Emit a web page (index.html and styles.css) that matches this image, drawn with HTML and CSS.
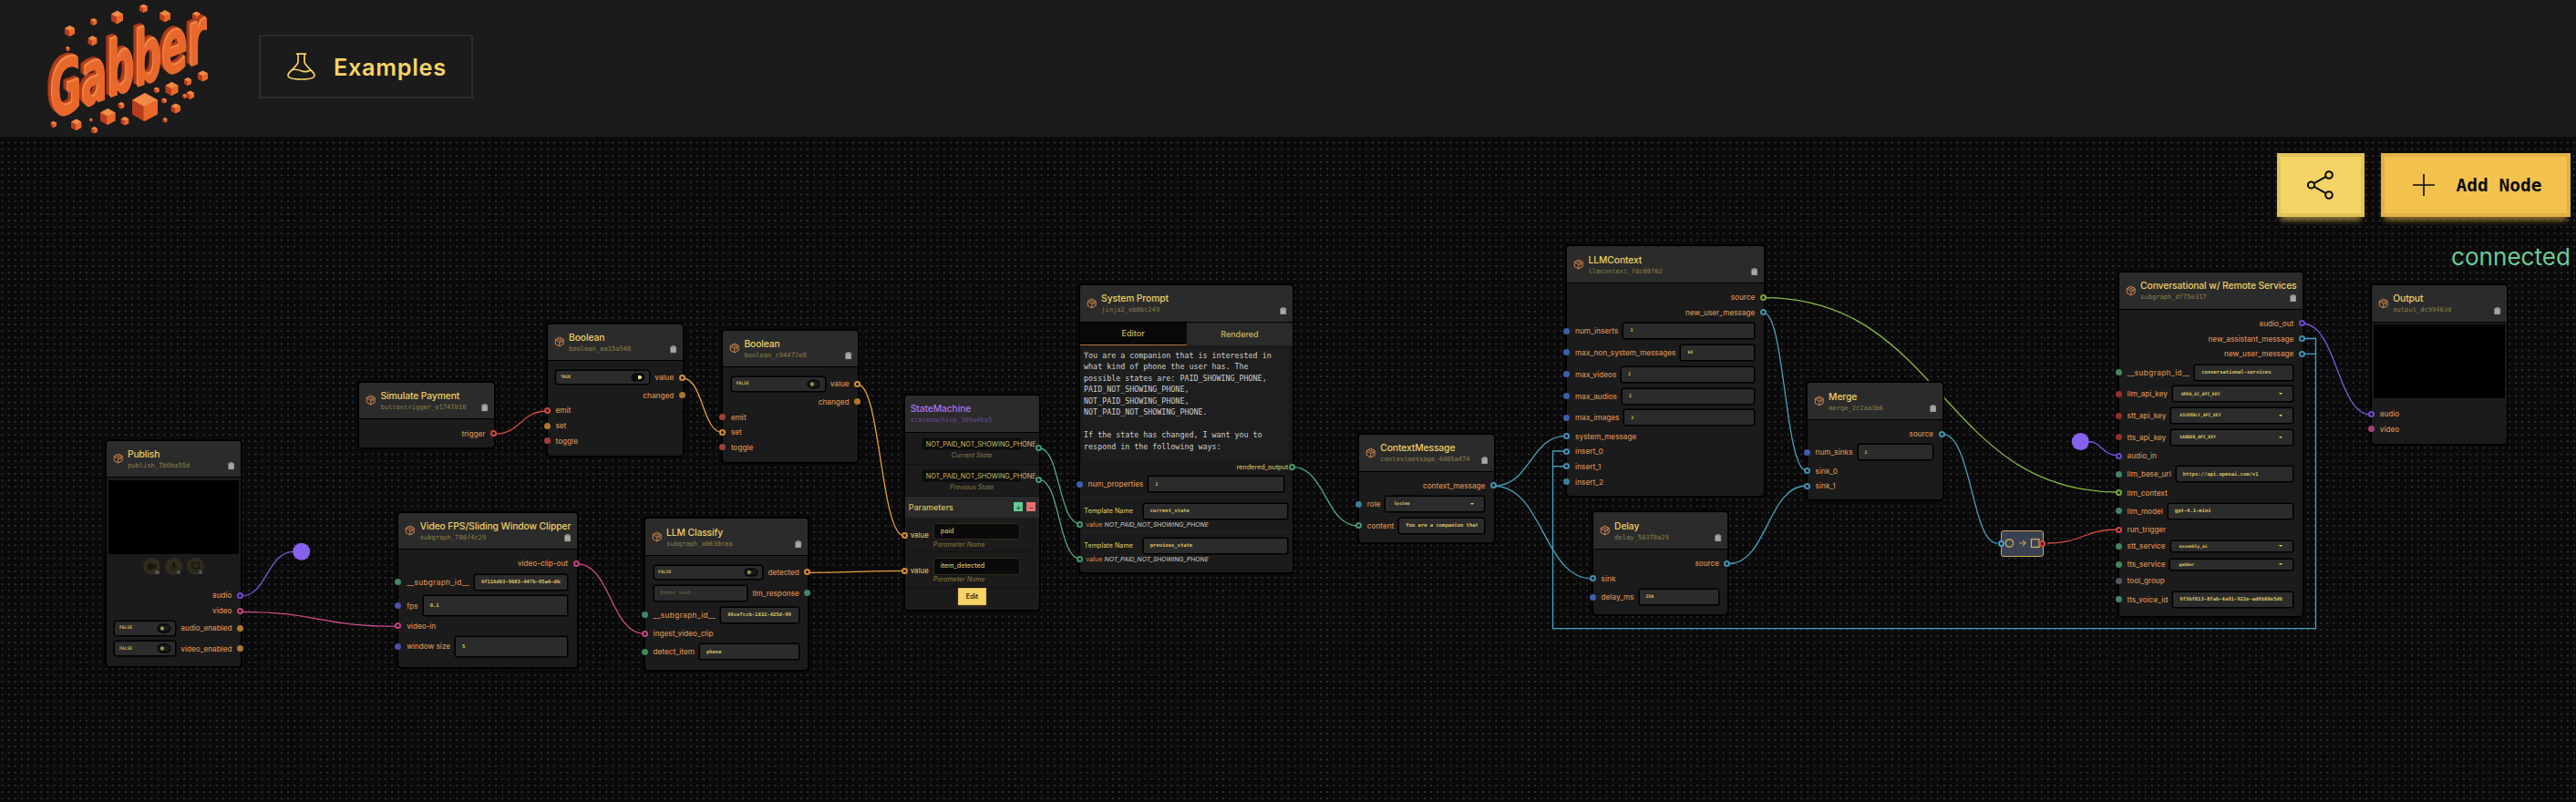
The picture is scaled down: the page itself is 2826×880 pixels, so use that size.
FILE: index.html
```html
<!DOCTYPE html>
<html lang="en">
<head>
<meta charset="utf-8">
<title>Gabber</title>
<link rel="stylesheet" href="styles.css">
</head>
<body>
<svg class="defs" width="0" height="0" aria-hidden="true">
  <symbol id="cube" viewBox="0 0 24 24"><path d="M12 1.800l9.300 5v10.400l-9.300 5-9.300-5V6.800z M2.700 6.800L7.500 9.400 M12 22v-9.500 M12 12.500l9.300-5.500 M12 12.500L7 9.700 M7 4.600l5 2.900 5-2.900 M17 10v5" fill="none" stroke="currentColor" stroke-width="2"/></symbol>
  <symbol id="clip" viewBox="0 0 14 16"><path d="M0 2h14v14H0z" fill="#6f6656"/><path d="M1.500 3h11v11.500h-11z" fill="#a9a7a4"/><path d="M4 0h6v4H4z" fill="#8d8d8d"/></symbol>
  <symbol id="box" viewBox="0 0 20 22"><path d="M0 5.500L10 0l10 5.500v11L10 22 0 16.500z" fill="#d9521f"/><path d="M0 5.500L10 0l10 5.500L10 11z" fill="#f08a45"/><path d="M0 5.500L9 10.500V22L0 16.500z" fill="#b93c1c"/><path d="M9 10.500l11-5v11L9 22z" fill="#e8692b"/></symbol>
</svg>

<header class="topbar">
  <div class="logo">
    <svg class="cubes" width="210" height="150" viewBox="0 0 210 150">
      <use href="#box" x="31" y="28" width="11" height="12"/><use href="#box" x="59" y="20" width="7.500" height="8"/>
      <use href="#box" x="82" y="11" width="13" height="16"/><use href="#box" x="113" y="4.500" width="9" height="9.500"/>
      <use href="#box" x="135" y="10.500" width="12" height="14.500"/><use href="#box" x="171" y="12.500" width="9" height="10"/>
      <use href="#box" x="56.500" y="39" width="10" height="11.500"/><use href="#box" x="32" y="51" width="4.500" height="5"/>
      <use href="#box" x="105" y="102" width="28" height="31"/><use href="#box" x="69.500" y="119" width="17.500" height="18"/>
      <use href="#box" x="38" y="130.500" width="11.500" height="12.500"/><use href="#box" x="15.500" y="133" width="6.500" height="7"/>
      <use href="#box" x="58" y="129.500" width="3.500" height="4"/><use href="#box" x="60" y="139" width="7" height="7.500"/>
      <use href="#box" x="92.500" y="128" width="9" height="9.500"/><use href="#box" x="89.500" y="112" width="7" height="7.500"/>
      <use href="#box" x="141" y="90" width="15" height="15"/><use href="#box" x="128.500" y="95.500" width="6.500" height="6.500"/>
      <use href="#box" x="162" y="85" width="8" height="9"/><use href="#box" x="176.500" y="77.500" width="12" height="12"/>
      <use href="#box" x="160" y="103" width="5" height="5"/><use href="#box" x="164.500" y="99.500" width="8.500" height="9.500"/>
      <use href="#box" x="137" y="107.500" width="6" height="6"/><use href="#box" x="147.500" y="113.500" width="10.500" height="11"/>
      <use href="#box" x="138.500" y="129" width="5" height="5.500"/>
    </svg>
    <span class="wordmark">Gabber</span>
  </div>
  <a class="examples">
    <svg width="31" height="30" viewBox="0 0 31 30" fill="none" stroke="currentColor" stroke-width="1.700" stroke-linecap="round" stroke-linejoin="round"><path d="M10.500 1.200h10M12 1.500v8.500c0 2-3 5-6.500 8.500C2 21.500.8 23.500 1 25c.3 2.800 6 4 14.500 4s14.200-1.200 14.500-4c.2-1.500-1-3.500-4.500-6.500C22 15 19 12 19 10V1.500M6 18.500c4-.8 7 .3 9.500 1.300 3 1.200 6.500 1 9.500-.6"/></svg>
    <span>Examples</span>
  </a>
</header>

<main class="canvas">
  <svg class="edges" width="2826" height="730" viewBox="0 150 2826 730" fill="none">
    <g class="e-purple"><path d="M264 654.300C293 654.300 293 605.300 322 605.300"/><path d="M2526 355C2564 355 2564 455 2601 455"/><path d="M2290 484.500C2307 484.500 2305 499.700 2324 499.700"/></g>
    <g class="e-pink"><path d="M264 671.300C350 671.300 350 687.300 436 687.300"/><path d="M633 618.700C670 618.700 670 695.300 707 695.300"/></g>
    <g class="e-red"><path d="M542 476.300C571 476.300 571 451 600 451"/><path d="M2246 596C2285 596 2285 581 2324 581"/></g>
    <g class="e-orange"><path d="M749 415C771 415 771 474.300 792 474.300"/><path d="M941 422C966 422 966 588 992 588"/><path d="M887 628.300C939 628.300 939 626.300 992 626.300"/></g>
    <g class="e-green"><path d="M1141 492C1162 492 1162 574.300 1184 574.300"/><path d="M1141 526.700C1162 526.700 1162 612.700 1184 612.700"/><path d="M1418 512.300C1454 512.300 1454 577 1490 577"/></g>
    <g class="e-lime"><path d="M1935 326.700C2130 326.700 2130 540 2324 540"/></g>
    <g class="e-blue"><path d="M1639 533.300C1679 533.300 1679 478.300 1718 478.300"/><path d="M1639 533.300C1693 533.300 1693 635 1747 635"/><path d="M1935 343.300C1958 343.300 1958 516.500 1982 516.500"/><path d="M1896 618.700C1939 618.700 1939 533 1982 533"/><path d="M2131 476.300C2163 476.300 2163 596 2191 596"/><path d="M2526 371.500H2540.500V689.700H1703.500V495H1718"/><path d="M2526 388.300H2540.500M1703.500 511.700H1718"/></g>
    <circle cx="330.700" cy="605.300" r="9.500" fill="#8760ee"/><circle cx="2282.300" cy="484.500" r="9.500" fill="#8760ee"/>
  </svg>

  <section class="node publish">
    <header class="head"><svg class="cube"><use href="#cube"/></svg><div class="names"><b>Publish</b><code>publish_7b0ba55d</code></div><svg class="clip"><use href="#clip"/></svg></header>
    <div class="video"></div>
    <div class="devices">
      <span><svg viewBox="0 0 20 20"><path d="M5.500 6.500h6v7h-6zM12 9l3-2.500v7L12 11z" fill="#15140e"/></svg></span>
      <span><svg viewBox="0 0 20 20"><path d="M8.500 5h3v6h-3zM9.500 13h1v2h-1z" fill="#15140e"/><path d="M7 9.500c0 5 6 5 6 0" fill="none" stroke="#15140e"/></svg></span>
      <span><svg viewBox="0 0 20 20"><path d="M6 6h8v6H6zM8 14.500h4" fill="none" stroke="#15140e" stroke-width="1.300"/></svg></span>
    </div>
    <div class="ports">
      <div class="row out"><label>audio</label><i class="pin r purple on"></i></div>
      <div class="row out"><label>video</label><i class="pin r pink on"></i></div>
      <div class="row bool"><span class="toggle">FALSE<i></i></span><label>audio_enabled</label><i class="pin r orange"></i></div>
      <div class="row bool"><span class="toggle">FALSE<i></i></span><label>video_enabled</label><i class="pin r orange"></i></div>
    </div>
  </section>

  <section class="node simulate">
    <header class="head"><svg class="cube"><use href="#cube"/></svg><div class="names"><b>Simulate Payment</b><code>buttontrigger_e1747b10</code></div><svg class="clip"><use href="#clip"/></svg></header>
    <div class="ports"><div class="row out"><label>trigger</label><i class="pin r red on"></i></div></div>
  </section>

  <section class="node clipper">
    <header class="head"><svg class="cube"><use href="#cube"/></svg><div class="names"><b>Video FPS/Sliding Window Clipper</b><code>subgraph_786f4c29</code></div><svg class="clip"><use href="#clip"/></svg></header>
    <div class="ports">
      <div class="row out"><label>video-clip-out</label><i class="pin r pink on"></i></div>
      <div class="row input"><i class="pin l green"></i><label class="dunder">__subgraph_id__</label><span class="field"><span>6f116d63-9083-447b-95a4-db5</span></span></div>
      <div class="row tall"><i class="pin l indigo"></i><label>fps</label><span class="field">0.1</span></div>
      <div class="row"><i class="pin l pink on"></i><label>video-in</label></div>
      <div class="row tall"><i class="pin l indigo"></i><label>window size</label><span class="field">5</span></div>
    </div>
  </section>

  <section class="node bool1">
    <header class="head"><svg class="cube"><use href="#cube"/></svg><div class="names"><b>Boolean</b><code>boolean_ea15a548</code></div><svg class="clip"><use href="#clip"/></svg></header>
    <div class="ports">
      <div class="row bool"><span class="toggle yes">TRUE<i></i></span><label>value</label><i class="pin r orange on"></i></div>
      <div class="row out"><label>changed</label><i class="pin r orange"></i></div>
      <div class="row"><i class="pin l red on"></i><label>emit</label></div>
      <div class="row"><i class="pin l orange"></i><label>set</label></div>
      <div class="row"><i class="pin l red"></i><label>toggle</label></div>
    </div>
  </section>

  <section class="node bool2">
    <header class="head"><svg class="cube"><use href="#cube"/></svg><div class="names"><b>Boolean</b><code>boolean_c94472e8</code></div><svg class="clip"><use href="#clip"/></svg></header>
    <div class="ports">
      <div class="row bool"><span class="toggle">FALSE<i></i></span><label>value</label><i class="pin r orange on"></i></div>
      <div class="row out"><label>changed</label><i class="pin r orange"></i></div>
      <div class="row"><i class="pin l red"></i><label>emit</label></div>
      <div class="row"><i class="pin l orange on"></i><label>set</label></div>
      <div class="row"><i class="pin l red"></i><label>toggle</label></div>
    </div>
  </section>

  <section class="node classify">
    <header class="head"><svg class="cube"><use href="#cube"/></svg><div class="names"><b>LLM Classify</b><code>subgraph_a0630cea</code></div><svg class="clip"><use href="#clip"/></svg></header>
    <div class="ports">
      <div class="row bool"><span class="toggle">FALSE<i></i></span><label>detected</label><i class="pin r orange on"></i></div>
      <div class="row input"><span class="field hint">Enter text...</span><label>llm_response</label><i class="pin r green"></i></div>
      <div class="row input"><i class="pin l green"></i><label class="dunder">__subgraph_id__</label><span class="field"><span>66ce7ccb-1832-425d-99</span></span></div>
      <div class="row"><i class="pin l pink on"></i><label>ingest_video_clip</label></div>
      <div class="row input"><i class="pin l green"></i><label>detect_item</label><span class="field">phone</span></div>
    </div>
  </section>

  <section class="node machine">
    <header class="head"><div class="names"><b>StateMachine</b><code>statemachine_309a4ba5</code></div></header>
    <div class="state"><span class="statebox">NOT_PAID_NOT_SHOWING_PHONE</span><em>Current State</em><i class="pin r green on"></i></div>
    <div class="state"><span class="statebox">NOT_PAID_NOT_SHOWING_PHONE</span><em>Previous State</em><i class="pin r green on"></i></div>
    <div class="params"><span>Parameters</span><button class="plus">+</button><button class="minus">−</button></div>
    <div class="param"><i class="pin l orange on"></i><label>value</label><div><span class="parambox">paid</span><em>Parameter Name</em></div></div>
    <div class="param"><i class="pin l orange on"></i><label>value</label><div><span class="parambox">item_detected</span><em>Parameter Name</em></div></div>
    <button class="edit">Edit</button>
  </section>

  <section class="node prompt">
    <header class="head"><svg class="cube"><use href="#cube"/></svg><div class="names"><b>System Prompt</b><code>jinja2_eb0bc249</code></div><svg class="clip"><use href="#clip"/></svg></header>
    <nav class="tabs"><span class="active">Editor</span><span>Rendered</span></nav>
    <pre class="editor">You are a companion that is interested in
what kind of phone the user has. The
possible states are: PAID_SHOWING_PHONE,
PAID_NOT_SHOWING_PHONE,
NOT_PAID_SHOWING_PHONE,
NOT_PAID_NOT_SHOWING_PHONE.

If the state has changed, I want you to
respond in the following ways:</pre>
    <div class="rendered"><label>rendered_output</label><i class="pin r green on"></i></div>
    <div class="row input"><i class="pin l blue"></i><label>num_properties</label><span class="field num">2</span></div>
    <div class="template"><div class="tname"><label>Template Name</label><span class="field">current_state</span></div><div class="tvalue"><i class="pin l green on"></i><label>value</label><em>NOT_PAID_NOT_SHOWING_PHONE</em></div></div>
    <div class="template"><div class="tname"><label>Template Name</label><span class="field">previous_state</span></div><div class="tvalue"><i class="pin l green on"></i><label>value</label><em>NOT_PAID_NOT_SHOWING_PHONE</em></div></div>
  </section>

  <section class="node context">
    <header class="head"><svg class="cube"><use href="#cube"/></svg><div class="names"><b>ContextMessage</b><code>contextmessage_4005a474</code></div><svg class="clip"><use href="#clip"/></svg></header>
    <div class="ports">
      <div class="row out"><label>context_message</label><i class="pin r teal on"></i></div>
      <div class="row input"><i class="pin l teal"></i><label>role</label><span class="field select wide">System</span></div>
      <div class="row input"><i class="pin l green on"></i><label>content</label><span class="field"><span>You are a companion that</span></span></div>
    </div>
  </section>

  <section class="node llm">
    <header class="head"><svg class="cube"><use href="#cube"/></svg><div class="names"><b>LLMContext</b><code>llmcontext_fdc08f62</code></div><svg class="clip"><use href="#clip"/></svg></header>
    <div class="ports">
      <div class="row out"><label>source</label><i class="pin r lime on"></i></div>
      <div class="row out"><label>new_user_message</label><i class="pin r teal on"></i></div>
      <div class="row input"><i class="pin l blue"></i><label>num_inserts</label><span class="field num">3</span></div>
      <div class="row input"><i class="pin l blue"></i><label>max_non_system_messages</label><span class="field num">64</span></div>
      <div class="row input"><i class="pin l blue"></i><label>max_videos</label><span class="field num">2</span></div>
      <div class="row input"><i class="pin l blue"></i><label>max_audios</label><span class="field num">2</span></div>
      <div class="row input"><i class="pin l blue"></i><label>max_images</label><span class="field num">2</span></div>
      <div class="row"><i class="pin l teal on"></i><label>system_message</label></div>
      <div class="row"><i class="pin l teal on"></i><label>insert_0</label></div>
      <div class="row"><i class="pin l teal on"></i><label>insert_1</label></div>
      <div class="row"><i class="pin l teal"></i><label>insert_2</label></div>
    </div>
  </section>

  <section class="node delay">
    <header class="head"><svg class="cube"><use href="#cube"/></svg><div class="names"><b>Delay</b><code>delay_50378a29</code></div><svg class="clip"><use href="#clip"/></svg></header>
    <div class="ports">
      <div class="row out"><label>source</label><i class="pin r teal on"></i></div>
      <div class="row"><i class="pin l teal on"></i><label>sink</label></div>
      <div class="row input"><i class="pin l blue"></i><label>delay_ms</label><span class="field num">250</span></div>
    </div>
  </section>

  <section class="node merge">
    <header class="head"><svg class="cube"><use href="#cube"/></svg><div class="names"><b>Merge</b><code>merge_2c2aa3b6</code></div><svg class="clip"><use href="#clip"/></svg></header>
    <div class="ports">
      <div class="row out"><label>source</label><i class="pin r teal on"></i></div>
      <div class="row input"><i class="pin l blue"></i><label>num_sinks</label><span class="field num">2</span></div>
      <div class="row"><i class="pin l teal on"></i><label>sink_0</label></div>
      <div class="row"><i class="pin l teal on"></i><label>sink_1</label></div>
    </div>
  </section>

  <div class="convert">
    <i class="pin l sky on"></i>
    <svg width="45" height="26" viewBox="0 0 45 26" fill="none" stroke="#dcb04b" stroke-width="1.200"><circle cx="8.500" cy="13" r="4.200"/><path d="M19 13h6.500M23 10l3 3-3 3" stroke="#b59a55"/><path d="M32.500 8.700h8.500v8.600h-8.500z"/></svg>
    <i class="pin r coral on"></i>
  </div>

  <section class="node remote">
    <header class="head"><svg class="cube"><use href="#cube"/></svg><div class="names"><b>Conversational w/ Remote Services</b><code>subgraph_df75e317</code></div><svg class="clip"><use href="#clip"/></svg></header>
    <div class="ports">
      <div class="row out"><label>audio_out</label><i class="pin r purple on"></i></div>
      <div class="row out"><label>new_assistant_message</label><i class="pin r teal on"></i></div>
      <div class="row out"><label>new_user_message</label><i class="pin r teal on"></i></div>
      <div class="row input"><i class="pin l green"></i><label class="dunder">__subgraph_id__</label><span class="field">conversational-services</span></div>
      <div class="row input"><i class="pin l crimson"></i><label>llm_api_key</label><span class="field select">OPEN_AI_API_KEY</span></div>
      <div class="row input"><i class="pin l crimson"></i><label>stt_api_key</label><span class="field select">ASSEMBLY_API_KEY</span></div>
      <div class="row input"><i class="pin l crimson"></i><label>tts_api_key</label><span class="field select">GABBER_API_KEY</span></div>
      <div class="row"><i class="pin l purple on"></i><label>audio_in</label></div>
      <div class="row input"><i class="pin l green"></i><label>llm_base_url</label><span class="field">https://api.openai.com/v1</span></div>
      <div class="row"><i class="pin l lime on"></i><label>llm_context</label></div>
      <div class="row input"><i class="pin l green"></i><label>llm_model</label><span class="field">gpt-4.1-mini</span></div>
      <div class="row"><i class="pin l red on"></i><label>run_trigger</label></div>
      <div class="row small"><i class="pin l green"></i><label>stt_service</label><span class="field select">assembly_ai</span></div>
      <div class="row small"><i class="pin l green"></i><label>tts_service</label><span class="field select">gabber</span></div>
      <div class="row"><i class="pin l gray"></i><label>tool_group</label></div>
      <div class="row input"><i class="pin l green"></i><label>tts_voice_id</label><span class="field"><span>9f3bf013-8fab-4a91-922e-ad6b80e5d6</span></span></div>
    </div>
  </section>

  <section class="node output">
    <header class="head"><svg class="cube"><use href="#cube"/></svg><div class="names"><b>Output</b><code>output_dc99463d</code></div><svg class="clip"><use href="#clip"/></svg></header>
    <div class="video"></div>
    <div class="ports">
      <div class="row"><i class="pin l purple on"></i><label>audio</label></div>
      <div class="row"><i class="pin l pink"></i><label>video</label></div>
    </div>
  </section>

  <aside class="panel">
    <div class="actions">
      <button class="share"><svg width="32" height="34" viewBox="0 0 32 34" fill="none" stroke="#0a0a0a" stroke-width="2"><circle cx="5.500" cy="17" r="3.600"/><circle cx="25" cy="6" r="3.800"/><circle cx="25" cy="28" r="3.800"/><path d="M8.500 15.300L21.700 7.900M8.500 18.700l13.200 7.400"/></svg></button>
      <button class="add"><svg width="24" height="24" viewBox="0 0 24 24" fill="none" stroke="#0a0a0a" stroke-width="1.600"><path d="M12 0v24M0 12h24"/></svg><span>Add Node</span></button>
    </div>
    <div class="status">connected</div>
  </aside>
</main>
</body>
</html>
```
FILE: styles.css
```css
* { box-sizing: border-box; }
body { margin: 0; background: #0a0a0a; font-family: Inter, "Liberation Sans", sans-serif; width: 2826px; height: 880px; overflow: hidden; }
button { font: inherit; border: 0; padding: 0; }
.defs { position: absolute; }

.topbar { height: 150px; background: #1b1b1b; display: flex; align-items: flex-start; padding-left: 40px; gap: 34px; }
.logo { position: relative; width: 210px; height: 150px; }
.cubes { display: block; }
.wordmark {
  position: absolute; left: 15px; top: 76px; font: 700 70px/70px "DejaVu Sans", sans-serif; color: #e8682c; letter-spacing: -1px;
  transform-origin: 0 100%; transform: matrix(0.61, -0.235, 0, 1.2, 0, 0);
  text-shadow: -1px -1px #f08a45, -2px -2px #f08a45, -3px -2.500px #c04520, -4px -3px #b9401e, -5px -3.500px #b23b1c, -6px -4px #b5401f, -7px -4.500px #a93519, -8px -5px #a93519;
}
.examples { margin-top: 38px; width: 235px; height: 70px; border: 2px solid #2d2d2d; display: flex; align-items: center; gap: 20px; padding-left: 29px; color: #f6d365; font-size: 25.300px; font-weight: 600; letter-spacing: 0.700px; }

.canvas { position: relative; height: 730px; background: radial-gradient(circle, #424242 0.550px, transparent 0.850px) -1px 3px / 7.125px 7.125px #0a0a0a; }
.edges { position: absolute; left: 0; top: 0; }
.edges g { stroke-width: 1.300; }
.e-purple { stroke: #7b57dd; } .e-pink { stroke: #d34d8b; } .e-red { stroke: #d64c46; } .e-orange { stroke: #e79d37; }
.e-green { stroke: #4ead7e; } .e-lime { stroke: #88bb3a; } .e-blue { stroke: #48a2c3; }

.node { position: absolute; background: #1b1b1b; border: 1px solid #000; border-radius: 4px; box-shadow: 0 0 1px 1px #000; }
.publish { left: 115.700px; top: 332.500px; width: 149.300px; height: 249.500px; }
.simulate { left: 393.200px; top: 268.700px; width: 149.700px; height: 73.500px; }
.clipper { left: 436.400px; top: 411.500px; width: 197.200px; height: 171px; }
.bool1 { left: 599.700px; top: 204.500px; width: 150px; height: 146.300px; }
.bool2 { left: 792.100px; top: 211.700px; width: 150px; height: 146.300px; }
.classify { left: 706.800px; top: 418.300px; width: 180.500px; height: 167.300px; }
.machine { left: 991.700px; top: 283px; width: 149.500px; height: 237.300px; }
.prompt { left: 1183.800px; top: 162px; width: 235.500px; height: 316.500px; }
.context { left: 1490px; top: 326px; width: 149.800px; height: 120.300px; }
.llm { left: 1718.300px; top: 119.300px; width: 217.500px; height: 275.300px; }
.delay { left: 1746.800px; top: 411.300px; width: 149.700px; height: 113.700px; }
.merge { left: 1981.800px; top: 269.300px; width: 149.800px; height: 130px; }
.remote { left: 2323.800px; top: 148px; width: 203px; height: 378.700px; }
.output { left: 2601px; top: 162px; width: 150px; height: 176.300px; }

.head { height: 40.500px; background: #2b2b2b; border-bottom: 1px solid #000; border-radius: 3px 3px 0 0; display: flex; padding: 0 6.500px 0 7px; }
.cube { width: 11.500px; height: 12px; margin-top: 13.500px; color: #d98a4e; flex: none; }
.names { width: 0; flex: 1; display: flex; flex-direction: column; padding: 7.300px 0 0 4.800px; white-space: nowrap; }
.names b { font-size: 10.300px; line-height: 14px; font-weight: 500; letter-spacing: -0.100px; color: #ecd065; }
.names code { font: 7.100px/11px "DejaVu Sans Mono", monospace; color: #8f8147; }
.clip { width: 7.500px; height: 8.500px; margin: 23.500px 0 0 -8px; flex: none; }

.ports { padding-top: 7.100px; }
.row { position: relative; height: 16.700px; display: flex; align-items: center; gap: 5px; padding: 0 9.500px 0 8.800px; }
.row.out { justify-content: flex-end; }
.row.input { height: 23.800px; }
.row.small { height: 19.800px; }
.row.tall { height: 28px; }
.row.bool { height: 22.200px; }
label { font-size: 8.120px; font-weight: 500; color: #d58d53; white-space: nowrap; }
.dunder { letter-spacing: 0.380px; }

.field { flex: 1; width: 0; height: 18px; background: #2b2b2b; border: 1px solid #000; border-radius: 2.500px; box-shadow: 0 0 0 0.500px #000; padding: 0 7px; overflow: hidden; white-space: nowrap; color: #dcc468; font: 700 5.500px/15.500px "DejaVu Sans Mono", monospace; display: flex; align-items: center; }
.field > span { min-width: 0; overflow: hidden; }
.small .field { height: 13px; line-height: 11px; }
.tall .field { height: 23px; }
.field.num { font-size: 4.700px; }
.field.select { font-size: 4.700px; padding-left: 9px; padding-right: 11px; }
.field.select::after { content: ""; margin-left: auto; border: 2px solid transparent; border-top: 2.500px solid #f0d060; border-bottom: 0; }
.field.hint { color: #77704c; font-weight: 400; }
.toggle { flex: 1; height: 16.500px; background: #2b2b2b; border: 1px solid #000; border-radius: 3px; box-shadow: 0 0 0 0.500px #000; padding: 0 5.500px 0 4.500px; display: flex; align-items: center; justify-content: space-between; color: #cdb864; font: 700 4.700px/14px "DejaVu Sans Mono", monospace; }
.toggle i { width: 13.500px; height: 8.500px; border: 1px solid #000; border-radius: 5px; background: radial-gradient(circle at 3.800px 50%, #9a8c55 1.900px, #1b1b1b 2.300px); box-shadow: 0 0 0 0.500px #000; }
.toggle.yes i { background: radial-gradient(circle at 7.800px 50%, #fbe36c 1.900px, #0a0a0a 2.300px); }

.pin { position: absolute; top: 50%; width: 7px; height: 7px; margin-top: -3.500px; border-radius: 50%; background: var(--c); }
.pin.l { left: -4px; }
.pin.r { right: -3px; }
.pin.on { background: radial-gradient(circle, #0a0a0a 1.100px, var(--r) 1.700px); }
.orange { --c: #ad782c; --r: #d98e2e; } .red { --c: #a03f3b; --r: #d4453f; } .green { --c: #428763; --r: #43996d; }
.teal { --c: #3c8096; --r: #3d92b3; } .pink { --c: #a04074; --r: #c73f7e; } .purple { --c: #7148d8; --r: #7148d8; }
.blue { --c: #3c5eb0; --r: #3c5eb0; } .indigo { --c: #4f4fa8; --r: #4f4fa8; } .lime { --c: #72a030; --r: #79a832; }
.crimson { --c: #952f2d; --r: #952f2d; } .gray { --c: #52555e; --r: #52555e; } .sky { --c: #3fa3cf; --r: #3fa3cf; } .coral { --c: #e04540; --r: #e04540; }

.video { margin: 2.500px 2px 0; height: 81.300px; background: #000; }
.output .ports { padding-top: 8.500px; }
.devices { display: flex; justify-content: center; gap: 4.700px; padding-top: 4.700px; }
.devices span { position: relative; width: 19px; height: 19px; border-radius: 50%; background: #2f2c1e; display: flex; }
.devices span::after { content: ""; position: absolute; right: 1.500px; bottom: 1px; width: 4.500px; height: 4.500px; border-radius: 50%; background: #56575a; }
.publish .ports { padding-top: 13.500px; }

.machine .head { padding-left: 6px; }
.machine .names { padding-left: 0; }
.machine .names b { color: #ab74f5; }
.machine .names code { color: #694a92; }
.state { position: relative; height: 35px; border-bottom: 1px solid #111; padding: 5.500px 19px 0 18.500px; text-align: center; }
.statebox { display: block; height: 14.300px; background: #0c0c0c; border: 1px solid #141414; border-radius: 2px; padding-left: 3.500px; font-size: 7.250px; line-height: 13px; text-align: left; color: #d2bb61; white-space: nowrap; }
em { display: block; font-size: 7px; line-height: 9px; color: #7a6d3b; white-space: nowrap; font-weight: 500; }
.state em { margin-top: 1px; }
.params { height: 23.300px; background: #2a2a2a; display: flex; align-items: center; gap: 4px; padding: 0 4px; color: #dcc468; font-size: 9px; font-weight: 500; }
.params span { margin-right: auto; }
.params button { width: 10px; height: 10px; font-size: 9px; line-height: 9px; color: #2a4a3a; }
.plus { background: #63cb97; }
.params .minus { background: #e87272; color: #733; }
.param { position: relative; height: 38.500px; border-bottom: 1px solid #121212; display: flex; padding: 6px 0 0 6px; gap: 5px; }
.param label { color: #d2bb61; font-size: 7.800px; line-height: 10px; margin-top: 8.500px; width: 20px; }
.param .pin { top: 20px; }
.parambox { display: block; width: 95px; height: 18.500px; background: #0a0a0a; border: 1px solid #302b18; border-radius: 3px; padding-left: 7px; font-size: 7.200px; line-height: 16px; color: #d2bb61; font-weight: 500; }
.param em { margin-top: 0.500px; }
.edit { display: block; margin: 0 auto; width: 30.500px; height: 19.700px; background: #f6d365; border: 1px solid #dfbf5a; font-size: 7.200px; font-weight: 600; color: #1a1a1a; box-shadow: 0 1px 2px #a0803060; }

.tabs { display: flex; height: 25.500px; }
.tabs span { flex: 1; background: #2a2a2a; color: #cdb65e; font-size: 9px; font-weight: 500; line-height: 25px; text-align: center; }
.tabs .active { background: #090909; border-bottom: 1.500px solid #b8703a; line-height: 23px; }
.editor { margin: 4px 4px 0 3.500px; height: 120px; padding: 0.500px 0 0 0.800px; background: #1e1e1e; color: #cfcfcf; font: 8.330px/12.500px "DejaVu Sans Mono", monospace; }
.rendered { position: relative; height: 18px; display: flex; justify-content: flex-end; align-items: center; padding-right: 5px; }
.rendered label, .tname label { color: #cbb55d; font-size: 7.200px; }
.template { height: 38.200px; border-top: 1px solid #222; padding-top: 5px; }
.prompt .row { height: 20.500px; margin-bottom: 3.800px; }
.tname { display: flex; align-items: center; height: 19px; padding: 0 5px 0 4.500px; }
.tname label { width: 64.500px; }
.tvalue { position: relative; display: flex; align-items: center; height: 10px; gap: 2px; padding-left: 6.500px; }
.tvalue label { font-size: 7.200px; font-weight: 400; }
.tvalue em { color: #d0d0d0; font-weight: 400; font-size: 6.850px; }

.convert { position: absolute; left: 2195px; top: 432px; width: 47.300px; height: 28.700px; background: #3a4153; border: 1.200px solid #d3a746; border-radius: 3px; }
.convert svg { display: block; }

.panel { position: absolute; right: 6px; top: 18px; display: flex; flex-direction: column; align-items: flex-end; }
.actions { display: flex; gap: 18px; }
.actions button { height: 70px; display: flex; align-items: center; justify-content: center; }
.share { width: 96px; background: #f6d365; border: 4px solid #e3c35a; box-shadow: 0 8px 6px -4px #8c783c; }
.add { width: 208px; background: #f3c24c; border: 4px solid #e1b145; box-shadow: 0 8px 6px -4px #8a6d2c; gap: 24px; padding-left: 3px; font: 700 19.500px "DejaVu Sans Mono", monospace; color: #0a0a0a; }
.status { margin-top: 24px; font-size: 26.100px; line-height: 40px; color: #6acb98; }
```
